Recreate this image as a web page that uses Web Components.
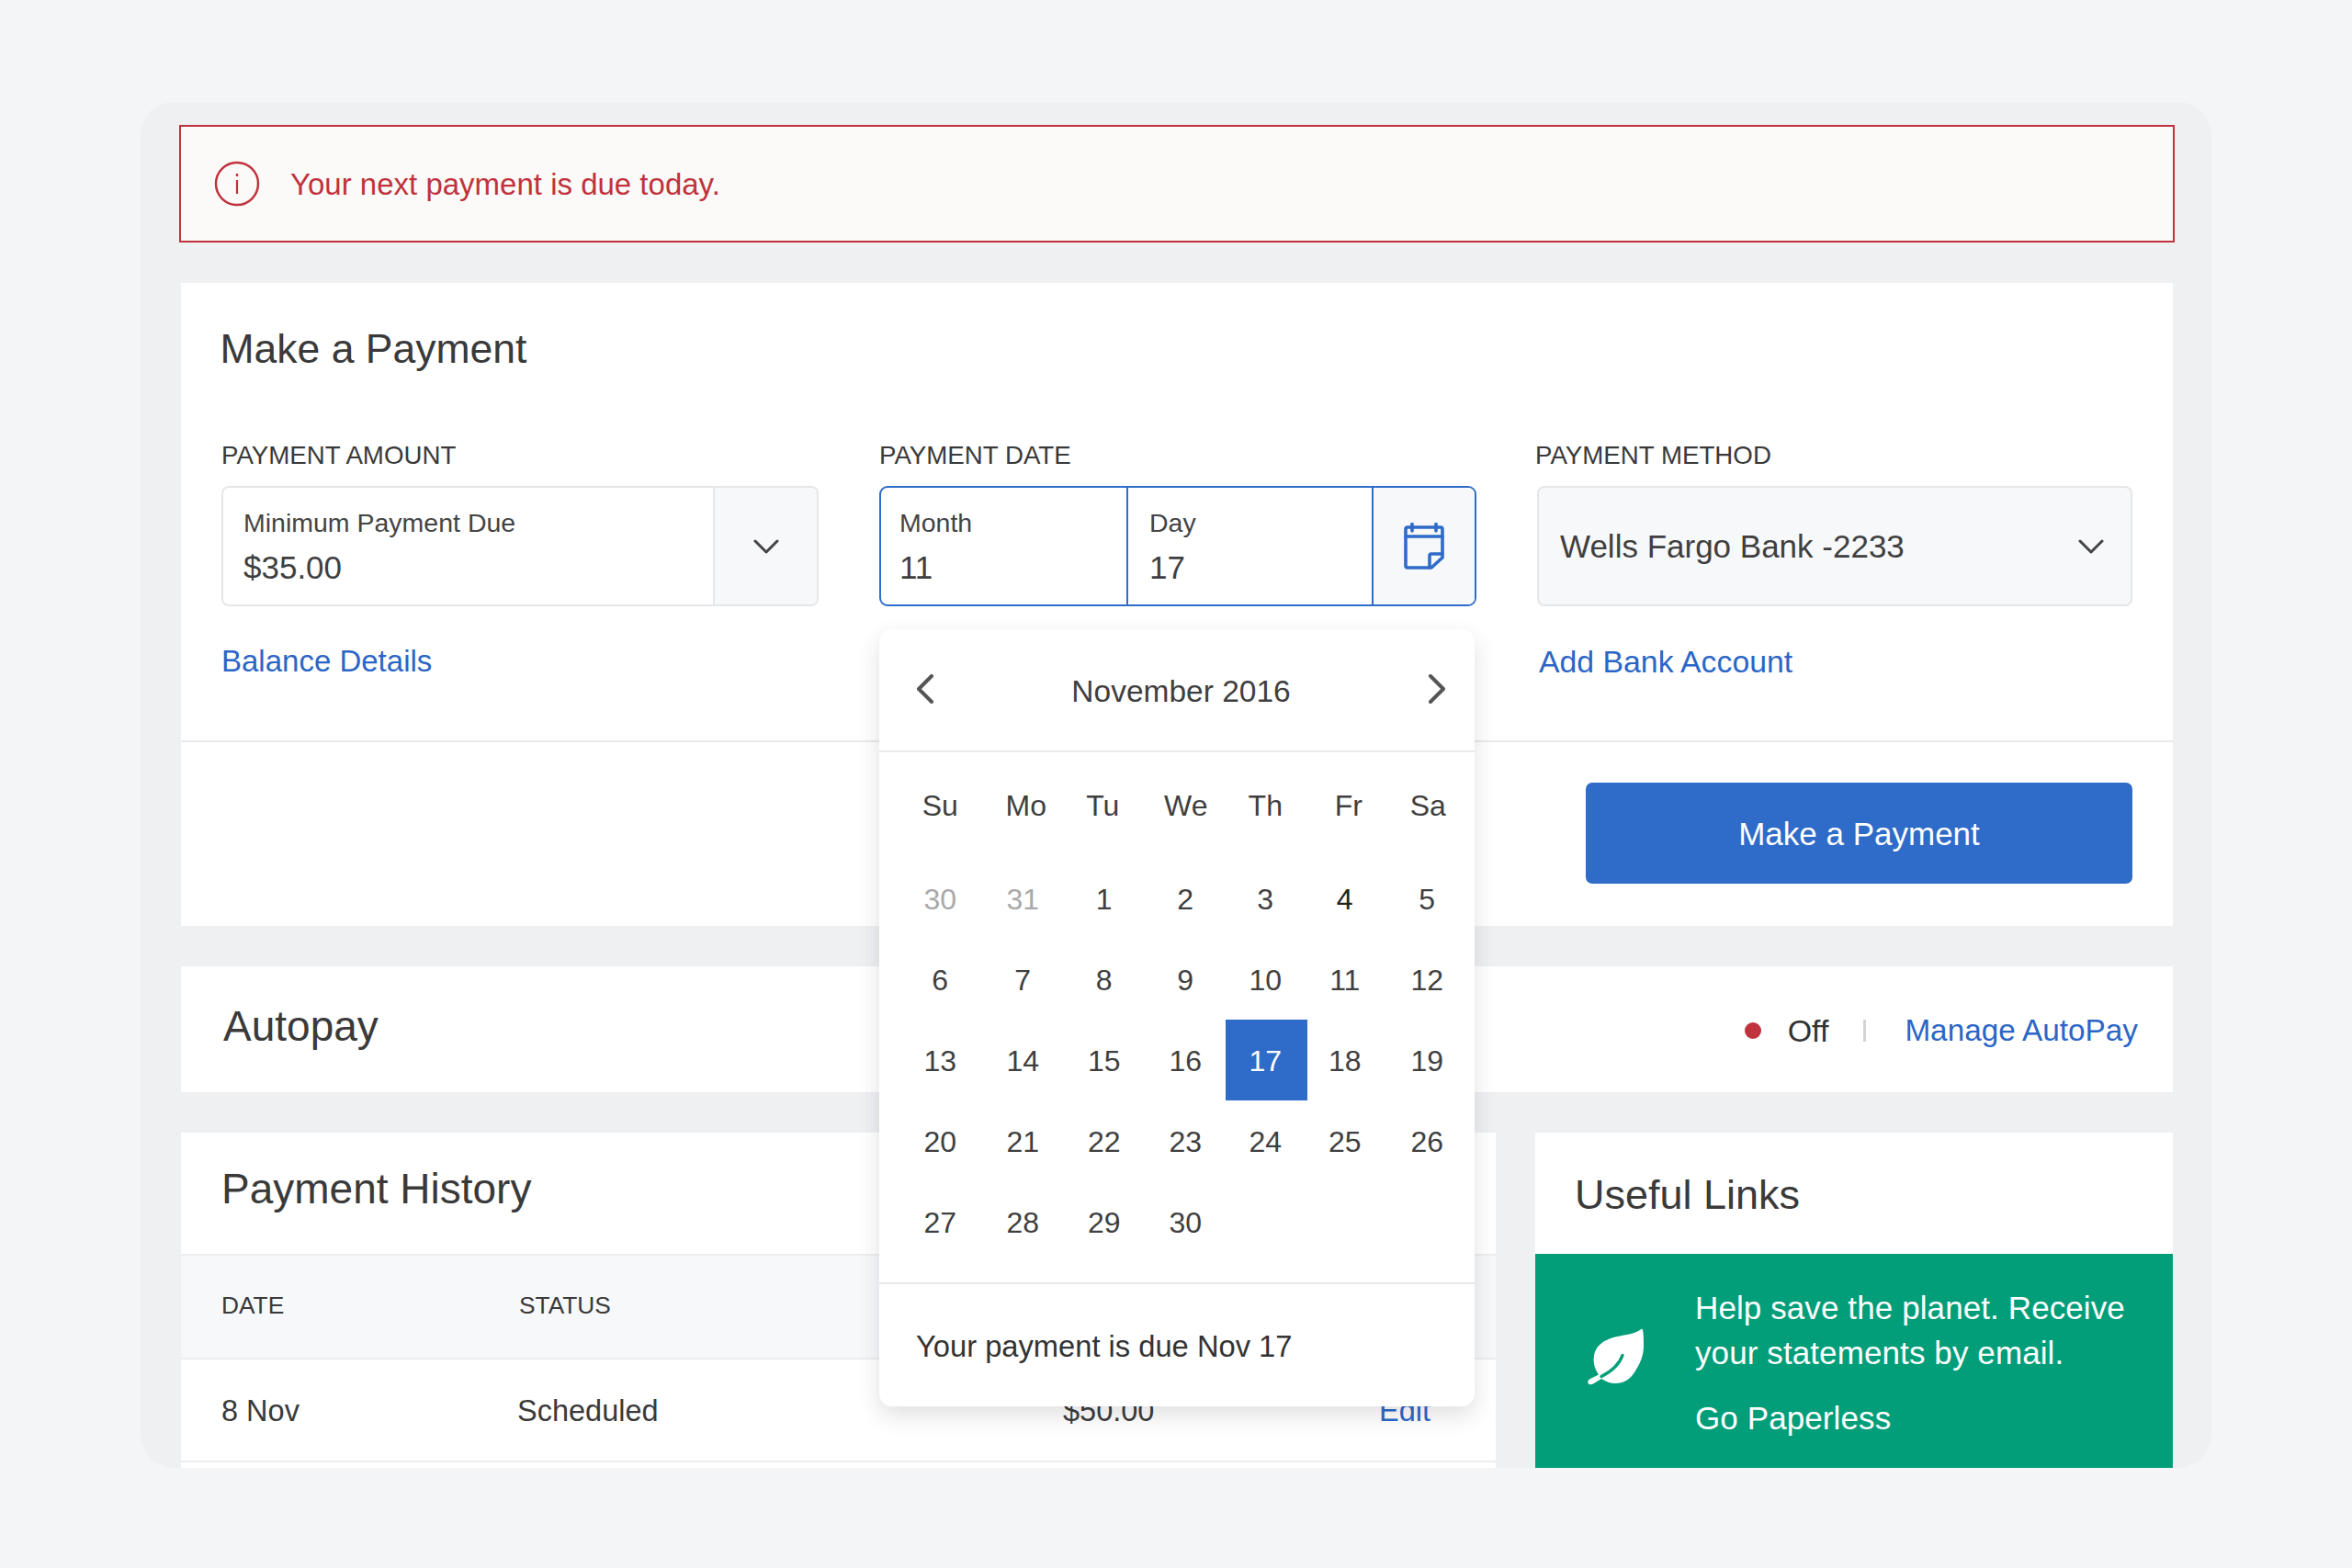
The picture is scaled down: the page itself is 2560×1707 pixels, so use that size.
<!DOCTYPE html>
<html lang="en">
<head>
<meta charset="utf-8">
<title>Make a Payment</title>
<style>
  html, body { margin: 0; padding: 0; }
  body {
    background: #f4f5f7;
    color: #3a3a3a;
    font-family: "Liberation Sans", Arial, sans-serif;
    padding: 111px 153px 0;
    height: 1596px;
    overflow: hidden;
  }
</style>
</head>
<body>
<pay-screen>
  <alert-banner>Your next payment is due today.</alert-banner>

  <payment-card>
    <pay-field>
      <span slot="label">PAYMENT AMOUNT</span>
      <amount-select>
        <span slot="caption">Minimum Payment Due</span>
        <span slot="value">$35.00</span>
      </amount-select>
      <span slot="link" style="font-size:33px">Balance Details</span>
    </pay-field>
    <pay-field>
      <span slot="label">PAYMENT DATE</span>
      <date-select></date-select>
      <calendar-popover slot="overlay"></calendar-popover>
    </pay-field>
    <pay-field>
      <span slot="label" style="margin-left:-2px">PAYMENT METHOD</span>
      <method-select>Wells Fargo Bank -2233</method-select>
      <span slot="link" style="margin-left:2px;font-size:33.8px">Add Bank Account</span>
    </pay-field>
  </payment-card>

  <autopay-bar></autopay-bar>

  <bottom-row>
    <history-card></history-card>
    <useful-links></useful-links>
  </bottom-row>
</pay-screen>

<script>
const CHEVRON = `<svg width="28" height="16" viewBox="0 0 28 16" fill="none" stroke="#444" stroke-width="3" stroke-linecap="round" stroke-linejoin="round"><path d="M2 2l12 12L26 2"/></svg>`;

class PayScreen extends HTMLElement {
  constructor() {
    super();
    this.attachShadow({ mode: 'open' });
  }

  connectedCallback() {
    this.shadowRoot.innerHTML = `
      <style>
        :host {
          display: flex;
          flex-direction: column;
          gap: 44px;
          box-sizing: border-box;
          width: 2254px;
          height: 1487px;
          padding: 25px 42px 0 44px;
          background: #eff0f2;
          border-radius: 36px;
          overflow: hidden;
        }
        ::slotted(*) { flex: none; }
      </style>
      <slot></slot>`;
  }
}

class AlertBanner extends HTMLElement {
  constructor() {
    super();
    this.attachShadow({ mode: 'open' });
  }

  connectedCallback() {
    this.shadowRoot.innerHTML = `
      <style>
        :host {
          display: flex;
          align-items: center;
          gap: 33px;
          box-sizing: border-box;
          height: 128px;
          margin: 0 -2px;
          padding-left: 36px;
          background: #fbfaf8;
          border: 2px solid #c0323c;
          color: #c0323c;
          font-size: 33px;
        }
        span { padding-top: 2px; }
      </style>
      <svg width="50" height="50" viewBox="0 0 50 50" fill="none" stroke="#c0323c">
        <circle cx="25" cy="25" r="23" stroke-width="2.5"/>
        <path d="M25 21v15" stroke-width="2.2"/>
        <path d="M25 14v3" stroke-width="2.4"/>
      </svg>
      <span><slot></slot></span>`;
  }
}

class PaymentCard extends HTMLElement {
  constructor() {
    super();
    this.attachShadow({ mode: 'open' });
  }

  connectedCallback() {
    this.shadowRoot.innerHTML = `
      <style>
        :host {
          display: block;
          height: 700px;
          background: #fff;
        }
        h2 {
          margin: 0;
          padding: 42px 44px 0 42.5px;
          font-size: 44.5px;
          font-weight: 400;
          line-height: 60px;
          color: #3a3a3a;
        }
        .fields {
          display: grid;
          grid-template-columns: 650px 650px 648px;
          gap: 66px;
          padding: 69px 44px 66px;
          border-bottom: 2px solid #e8e9eb;
        }
        .actions {
          display: flex;
          justify-content: flex-end;
          padding: 44px 44px 0;
        }
        .btn {
          display: flex;
          align-items: center;
          justify-content: center;
          width: 595px;
          height: 110px;
          border-radius: 7px;
          background: #2f6bc8;
          color: #fff;
          font-size: 35px;
          padding-top: 2px;
          box-sizing: border-box;
        }
      </style>
      <h2>Make a Payment</h2>
      <div class="fields"><slot></slot></div>
      <div class="actions"><div class="btn">Make a Payment</div></div>`;
  }
}

class PayField extends HTMLElement {
  constructor() {
    super();
    this.attachShadow({ mode: 'open' });
  }

  connectedCallback() {
    this.shadowRoot.innerHTML = `
      <style>
        :host {
          display: block;
          position: relative;
        }
        .label {
          font-size: 27.7px;
          line-height: 34px;
          margin-bottom: 16px;
          color: #3a3a3a;
        }
        .link {
          height: 40px;
          margin-top: 40px;
          font-size: 33.5px;
          line-height: 40px;
          color: #2b66c6;
        }
      </style>
      <div class="label"><slot name="label"></slot></div>
      <slot></slot>
      <div class="link"><slot name="link"></slot></div>
      <slot name="overlay"></slot>`;
  }
}

const BOX_STYLES = `
  .caption { font-size: 28.5px; line-height: 34px; color: #444; }
  .value { font-size: 35px; line-height: 40px; margin-top: 12px; color: #3f3f3f; }
`;

class AmountSelect extends HTMLElement {
  constructor() {
    super();
    this.attachShadow({ mode: 'open' });
  }

  connectedCallback() {
    this.shadowRoot.innerHTML = `
      <style>
        :host {
          display: flex;
          box-sizing: border-box;
          height: 131px;
          background: #fff;
          border: 2px solid #e5e6e8;
          border-radius: 8px;
          overflow: hidden;
        }
        .text { flex: 1; padding: 21px 0 0 22px; }
        .arrow {
          display: flex;
          align-items: center;
          justify-content: center;
          width: 111px;
          background: #f7f8fa;
          border-left: 2px solid #e5e6e8;
        }
        ${BOX_STYLES}
      </style>
      <div class="text">
        <div class="caption"><slot name="caption"></slot></div>
        <div class="value"><slot name="value"></slot></div>
      </div>
      <div class="arrow">${CHEVRON}</div>`;
  }
}

class DateSelect extends HTMLElement {
  constructor() {
    super();
    this.attachShadow({ mode: 'open' });
  }

  connectedCallback() {
    this.shadowRoot.innerHTML = `
      <style>
        :host {
          display: grid;
          grid-template-columns: 269px 267px 1fr;
          box-sizing: border-box;
          height: 131px;
          background: #fff;
          border: 2px solid #2f6bc8;
          border-radius: 9px;
          overflow: hidden;
        }
        .part { padding: 21px 0 0 20px; border-right: 2px solid #2f6bc8; }
        .part + .part { padding-left: 23px; }
        .icon {
          display: flex;
          align-items: center;
          justify-content: center;
          background: #f7f8fa;
        }
        ${BOX_STYLES}
      </style>
      <div class="part"><div class="caption">Month</div><div class="value">11</div></div>
      <div class="part"><div class="caption">Day</div><div class="value">17</div></div>
      <div class="icon">
        <svg width="44" height="51" viewBox="0 0 44 51" fill="none" stroke="#2f6bc8" stroke-width="3.6" stroke-linecap="round" stroke-linejoin="round">
          <path d="M4 5h36a2 2 0 0 1 2 2v31L30 49H4a2 2 0 0 1-2-2V7a2 2 0 0 1 2-2z"/>
          <path d="M2 15h40M9 1.500v7.500M35 1.500v7.500"/>
          <path d="M28 49V36a2 2 0 0 1 2-2h12"/>
        </svg>
      </div>`;
  }
}

class MethodSelect extends HTMLElement {
  constructor() {
    super();
    this.attachShadow({ mode: 'open' });
  }

  connectedCallback() {
    this.shadowRoot.innerHTML = `
      <style>
        :host {
          display: flex;
          align-items: center;
          justify-content: space-between;
          box-sizing: border-box;
          height: 131px;
          padding: 0 29px 0 23px;
          background: #f7f8fa;
          border: 2px solid #e5e6e8;
          border-radius: 8px;
          font-size: 35px;
          color: #3f3f3f;
        }
      </style>
      <span><slot></slot></span>${CHEVRON}`;
  }
}

class CalendarPopover extends HTMLElement {
  constructor() {
    super();
    this.attachShadow({ mode: 'open' });
  }

  connectedCallback() {
    const names = ['Su', 'Mo', 'Tu', 'We', 'Th', 'Fr', 'Sa'];
    const muted = [30, 31];
    const days = [...muted, ...Array.from({ length: 30 }, (_, i) => i + 1)];
    const cells = days.map((day, i) => {
      let cls = 'cell';
      if (i < 2) cls += ' muted';
      if (i > 1 && day === 4) cls += ' dark';
      if (i > 1 && day === 17) cls += ' selected';
      return `<div class="${cls}">${day}</div>`;
    }).join('');

    this.shadowRoot.innerHTML = `
      <style>
        :host {
          display: flex;
          flex-direction: column;
          position: absolute;
          left: 0;
          top: 206px;
          z-index: 10;
          box-sizing: border-box;
          width: 648px;
          height: 846px;
          background: #fff;
          border-radius: 14px;
          box-shadow: 0 10px 24px rgba(40, 45, 60, .14);
          color: #3f3f3f;
        }
        header {
          display: flex;
          align-items: center;
          justify-content: space-between;
          box-sizing: border-box;
          height: 134px;
          padding: 0 31px 2px 40px;
          border-bottom: 2px solid #e8e9eb;
        }
        .title { font-size: 33.5px; padding-top: 6px; }
        .grid {
          display: grid;
          grid-template-columns: repeat(7, 88.5px);
          padding: 27px 0 0 23px;
        }
        .name {
          box-sizing: border-box;
          height: 62px;
          padding-right: 2px;
          line-height: 62px;
          text-align: center;
          font-size: 32px;
          margin-bottom: 26px;
        }
        .name:nth-child(2) { padding: 0 0 0 8px; }
        .name:nth-child(4) { padding: 0 0 0 2px; }
        .name:nth-child(6) { padding: 0 0 0 2px; }
        .cell {
          box-sizing: border-box;
          height: 88px;
          padding-top: 2px;
          line-height: 86px;
          text-align: center;
          font-size: 32px;
        }
        .cell:nth-child(7n+1) { padding-right: 2px; }
        .cell:nth-child(7n+2),
        .cell:nth-child(7n+3),
        .cell:nth-child(7n+4) { padding-left: 1px; }
        .cell:nth-child(7n+5) { padding-right: 2px; }
        .cell:nth-child(7n+6) { padding-right: 6px; }
        .cell:nth-child(7n) { padding-right: 4px; }
        .muted { color: #a9a9a9; }
        .dark { color: #222; }
        .selected { background: #2f6bc8; color: #fff; }
        footer {
          display: flex;
          align-items: center;
          flex: 1;
          margin-top: 22px;
          padding: 2px 0 0 40px;
          border-top: 2px solid #e8e9eb;
          font-size: 32.7px;
          color: #333;
        }
      </style>
      <header>
        <svg width="20" height="32" viewBox="0 0 20 32" fill="none" stroke="#555" stroke-width="4" stroke-linecap="round" stroke-linejoin="round"><path d="M17 2L3 16l14 14"/></svg>
        <span class="title">November 2016</span>
        <svg width="20" height="32" viewBox="0 0 20 32" fill="none" stroke="#555" stroke-width="4" stroke-linecap="round" stroke-linejoin="round"><path d="M3 2l14 14L3 30"/></svg>
      </header>
      <div class="grid">
        ${names.map((n) => `<div class="name">${n}</div>`).join('')}
        ${cells}
      </div>
      <footer>Your payment is due Nov 17</footer>`;
  }
}

class AutopayBar extends HTMLElement {
  constructor() {
    super();
    this.attachShadow({ mode: 'open' });
  }

  connectedCallback() {
    this.shadowRoot.innerHTML = `
      <style>
        :host {
          display: flex;
          align-items: center;
          justify-content: space-between;
          box-sizing: border-box;
          height: 137px;
          padding: 0 38px 0 46px;
          background: #fff;
        }
        h2 {
          margin: 0 0 7px;
          font-size: 46px;
          font-weight: 400;
          color: #3a3a3a;
        }
        .status {
          display: flex;
          align-items: center;
          padding-top: 3px;
          color: #333;
        }
        .dot {
          width: 18px;
          height: 18px;
          margin-right: 29px;
          border-radius: 50%;
          background: #c0323c;
        }
        .off { font-size: 34px; }
        .sep {
          width: 3px;
          height: 24px;
          margin: 0 42px 0 38px;
          background: #d3d4d6;
        }
        .link { font-size: 33.3px; color: #2b66c6; }
      </style>
      <h2>Autopay</h2>
      <div class="status">
        <div class="dot"></div>
        <span class="off">Off</span>
        <div class="sep"></div>
        <span class="link">Manage AutoPay</span>
      </div>`;
  }
}

class BottomRow extends HTMLElement {
  constructor() {
    super();
    this.attachShadow({ mode: 'open' });
  }

  connectedCallback() {
    this.shadowRoot.innerHTML = `
      <style>
        :host {
          display: grid;
          grid-template-columns: 1431px 694px;
          gap: 43px;
          height: 365px;
          overflow: hidden;
        }
      </style>
      <slot></slot>`;
  }
}

class HistoryCard extends HTMLElement {
  constructor() {
    super();
    this.attachShadow({ mode: 'open' });
  }

  connectedCallback() {
    this.shadowRoot.innerHTML = `
      <style>
        :host {
          display: block;
          background: #fff;
          color: #3a3a3a;
        }
        h2 {
          margin: 0;
          padding: 31px 0 41px 44px;
          font-size: 46px;
          font-weight: 400;
          line-height: 60px;
          color: #3a3a3a;
        }
        .row {
          display: grid;
          align-items: center;
          box-sizing: border-box;
          padding-left: 44px;
          border-bottom: 2px solid #eceded;
        }
        .head {
          grid-template-columns: 324px 1fr;
          height: 115px;
          background: #f7f8fa;
          border-top: 2px solid #eceded;
          font-size: 26.3px;
          padding-bottom: 2px;
        }
        .body {
          grid-template-columns: 322px 594px 344px 1fr;
          height: 112px;
          font-size: 32.5px;
          padding-top: 2px;
        }
        .edit { color: #2b66c6; }
      </style>
      <h2>Payment History</h2>
      <div class="row head"><span>DATE</span><span>STATUS</span></div>
      <div class="row body"><span>8 Nov</span><span>Scheduled</span><span>$50.00</span><span class="edit">Edit</span></div>`;
  }
}

class UsefulLinks extends HTMLElement {
  constructor() {
    super();
    this.attachShadow({ mode: 'open' });
  }

  connectedCallback() {
    this.shadowRoot.innerHTML = `
      <style>
        :host {
          display: block;
          background: #fff;
        }
        h2 {
          margin: 0;
          padding: 38px 0 34px 43px;
          font-size: 45px;
          font-weight: 400;
          line-height: 60px;
          color: #3a3a3a;
        }
        .promo {
          display: flex;
          height: 233px;
          box-sizing: border-box;
          padding: 34px 0 0 57px;
          gap: 55px;
          background: #029e79;
          color: #fff;
          font-size: 35px;
          letter-spacing: .1px;
          line-height: 49px;
        }
        svg { margin-top: 46px; flex: none; }
        .cta { margin-top: 22px; }
      </style>
      <h2>Useful Links</h2>
      <div class="promo">
        <svg width="62" height="63" viewBox="0 0 62 63">
          <path fill="#fff" d="M59 1.500c-6 5-14 6-24 8C21 12 9 18 7 31c-1 7 0 12 4 19l1 1.500-10 5c-2 1.500-2 4-1 5 1 1 3 1 5 0l9-5.500c5 3 10 5 15 5 9 0 16-4 21-12 6-9 10-18 10-29 0-6 0-13-1-17-.4-1.500-1-1.500-1.500-1z"/>
          <path fill="none" stroke="#029e79" stroke-width="3.4" stroke-linecap="round" d="M15 53.500c10-5 19-12 23-23"/>
        </svg>
        <div>
          <div>Help save the planet. Receive<br>your statements by email.</div>
          <div class="cta">Go Paperless</div>
        </div>
      </div>`;
  }
}

customElements.define('pay-screen', PayScreen);
customElements.define('alert-banner', AlertBanner);
customElements.define('payment-card', PaymentCard);
customElements.define('pay-field', PayField);
customElements.define('amount-select', AmountSelect);
customElements.define('date-select', DateSelect);
customElements.define('method-select', MethodSelect);
customElements.define('calendar-popover', CalendarPopover);
customElements.define('autopay-bar', AutopayBar);
customElements.define('bottom-row', BottomRow);
customElements.define('history-card', HistoryCard);
customElements.define('useful-links', UsefulLinks);
</script>
</body>
</html>
